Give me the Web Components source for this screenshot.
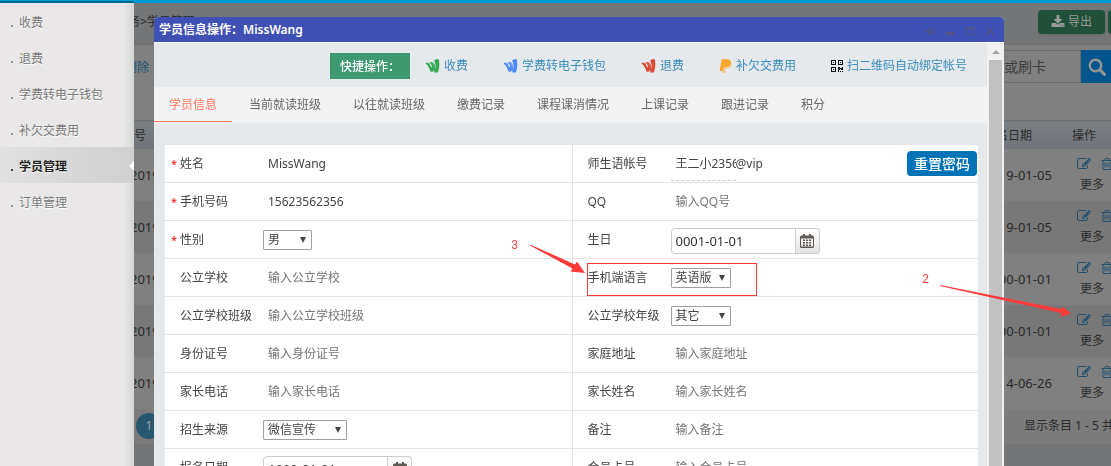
<!DOCTYPE html>
<html lang="zh-CN">
<head>
<meta charset="utf-8">
<title>学员管理</title>
<style>
  html, body { height: 100%; }
  body { margin: 0; overflow: hidden; background: #747577; color: #444;
         font: 12px/18px "Noto Sans", "Noto Sans CJK SC", sans-serif; }
</style>
</head>
<body>
<app-shell>
  <side-nav slot="nav">
    <nav-item>收费</nav-item>
    <nav-item>退费</nav-item>
    <nav-item>学费转电子钱包</nav-item>
    <nav-item>补欠交费用</nav-item>
    <nav-item active>学员管理</nav-item>
    <nav-item>订单管理</nav-item>
  </side-nav>
  <student-list></student-list>
</app-shell>

<student-dialog name="MissWang">
  <quick-bar slot="quick">
    <quick-link icon="wallet" tint="#34a853">收费</quick-link>
    <quick-link icon="wallet" tint="#4d8bf9">学费转电子钱包</quick-link>
    <quick-link icon="wallet" tint="#d94a38">退费</quick-link>
    <quick-link icon="paypal" tint="#fba631">补欠交费用</quick-link>
    <quick-link icon="qr" tint="#111">扫二维码自动绑定帐号</quick-link>
  </quick-bar>
  <tab-bar slot="tabs">
    <tab-item active>学员信息</tab-item>
    <tab-item>当前就读班级</tab-item>
    <tab-item>以往就读班级</tab-item>
    <tab-item>缴费记录</tab-item>
    <tab-item>课程课消情况</tab-item>
    <tab-item>上课记录</tab-item>
    <tab-item>跟进记录</tab-item>
    <tab-item>积分</tab-item>
  </tab-bar>
  <form-grid>
    <form-field required label="姓名" value="MissWang"></form-field>
    <form-field label="师生语帐号" kind="account" value="王二小2356" suffix="@vip"><reset-button>重置密码</reset-button></form-field>
    <form-field required label="手机号码" value="15623562356"></form-field>
    <form-field label="QQ" hint="输入QQ号"></form-field>
    <form-field required label="性别" kind="select" size="s" value="男"></form-field>
    <form-field label="生日" kind="date" value="0001-01-01"></form-field>
    <form-field label="公立学校" hint="输入公立学校"></form-field>
    <form-field label="手机端语言" kind="select" size="m" value="英语版"></form-field>
    <form-field label="公立学校班级" hint="输入公立学校班级"></form-field>
    <form-field label="公立学校年级" kind="select" size="m" value="其它"></form-field>
    <form-field label="身份证号" hint="输入身份证号"></form-field>
    <form-field label="家庭地址" hint="输入家庭地址"></form-field>
    <form-field label="家长电话" hint="输入家长电话"></form-field>
    <form-field label="家长姓名" hint="输入家长姓名"></form-field>
    <form-field label="招生来源" kind="select" size="l" value="微信宣传"></form-field>
    <form-field label="备注" hint="输入备注"></form-field>
    <form-field label="报名日期" kind="date" value="1900-01-01"></form-field>
    <form-field label="会员卡号" hint="输入会员卡号"></form-field>
  </form-grid>
</student-dialog>

<guide-marks></guide-marks>

<script>
const ICONS = {
  edit: ['0 0 1792 1792', '<path d="M888 1184l116-116-152-152-116 116v56h96v96h56zm440-720q-16-16-33 1l-350 350q-17 17-1 33t33-1l350-350q17-17 1-33zm80 594v190q0 119-84.5 203.5t-203.5 84.5h-832q-119 0-203.5-84.5t-84.5-203.5v-832q0-119 84.5-203.5t203.5-84.5h832q63 0 117 25 15 7 18 23 3 17-9 29l-49 49q-14 14-32 8-23-6-45-6h-832q-66 0-113 47t-47 113v832q0 66 47 113t113 47h832q66 0 113-47t47-113v-126q0-13 9-22l64-64q15-15 35-7t20 29zm-96-738l288 288-672 672h-288v-288zm444 132l-92 92-288-288 92-92q28-28 68-28t68 28l152 152q28 28 28 68t-28 68z"/>'],
  trash: ['0 0 1792 1792', '<path d="M704 736v576q0 14-9 23t-23 9h-64q-14 0-23-9t-9-23v-576q0-14 9-23t23-9h64q14 0 23 9t9 23zm256 0v576q0 14-9 23t-23 9h-64q-14 0-23-9t-9-23v-576q0-14 9-23t23-9h64q14 0 23 9t9 23zm256 0v576q0 14-9 23t-23 9h-64q-14 0-23-9t-9-23v-576q0-14 9-23t23-9h64q14 0 23 9t9 23zm128 724v-948h-896v948q0 22 7 40.5t14.5 27 10.5 8.5h832q3 0 10.5-8.5t14.5-27 7-40.5zm-672-1076h448l-48-117q-7-9-17-11h-317q-10 2-17 11zm928 32v64q0 14-9 23t-23 9h-96v948q0 83-47 143.5t-113 60.5h-832q-66 0-113-58.5t-47-141.5v-952h-96q-14 0-23-9t-9-23v-64q0-14 9-23t23-9h309l70-167q15-37 54-63t79-26h320q40 0 79 26t54 63l70 167h309q14 0 23 9t9 23z"/>'],
  download: ['0 0 1792 1792', '<path d="M1344 1344q0-26-19-45t-45-19-45 19-19 45 19 45 45 19 45-19 19-45zm256 0q0-26-19-45t-45-19-45 19-19 45 19 45 45 19 45-19 19-45zm128-224v320q0 40-28 68t-68 28h-1472q-40 0-68-28t-28-68v-320q0-40 28-68t68-28h465l135 136q58 56 136 56t136-56l136-136h464q40 0 68 28t28 68zm-325-569q17 41-14 70l-448 448q-18 19-45 19t-45-19l-448-448q-31-29-14-70 17-39 59-39h256v-448q0-26 19-45t45-19h256q26 0 45 19t19 45v448h256q42 0 59 39z"/>'],
  search: ['0 0 18 18', '<circle cx="7.5" cy="7.5" r="5.7" fill="none" stroke="currentColor" stroke-width="2.4"/><path d="M11.8 11.8L16.4 16.4" stroke="currentColor" stroke-width="3" stroke-linecap="round"/>'],
  wallet: ['0 0 14 14', '<path d="M0 4.2C2 3.4 3.6 4 4.4 5.6L7 11.6 5.2 12.6C4 9.6 2.4 6 0 4.2z"/><path d="M3.6 3.6C6 2.4 8 2.8 9 5L10.6 10.4 9 13.2C8 9.6 6.2 5.4 3.6 3.6z" opacity=".85"/><path d="M3 6l2.4 6.8h2.2L9 9.6 7.4 5 6 8.4z"/><path d="M8.6 1.6C10 0 11.8-.2 13.4.6 14.2 5.2 13.8 9.8 12.4 13.4H8.8C10.8 9.8 10.4 5.2 8.6 1.6z"/>'],
  paypal: ['0 0 13 14', '<path d="M2.6.2h5.600c2.800 0 4.200 1.400 3.800 3.800-.5 3-2.400 4.400-5.200 4.400H5L4 12H.6z"/><path d="M12.300 3.800c.6 3.600-1 5.600-4.400 5.600H6.600l-.9 4.400H2.800l.3-1.200h1.700L5.800 9H7c3.200 0 4.800-1.600 5.300-5.200z" opacity=".75"/>'],
  qr: ['0 0 12 12', '<path fill-rule="evenodd" d="M0 0h5v5H0zM1 1v3h3V1zM2 2h1v1H2zM7 0h5v5H7zM8 1v3h3V1zM9 2h1v1H9zM0 7h5v5H0zM1 8v3h3V8zM2 9h1v1H2zM7 7h2v1h2V7h1v3h-2V9H9v1H8v2H7zM9 11h1v1H9zM11 11h1v1h-1z"/>'],
  calendar: ['0 0 14 14', '<path fill-rule="evenodd" d="M1.5 1.5h11A1.5 1.5 0 0 1 14 3v9.5a1.5 1.5 0 0 1-1.5 1.5h-11A1.5 1.5 0 0 1 0 12.500V3a1.500 1.500 0 0 1 1.500-1.500zM1 4.500v8h12v-8z"/><path d="M3 0h2v3H3zM9 0h2v3H9zM3 5.500h2v1.600H3zM6 5.500h2v1.600H6zM9 5.500h2v1.600H9zM3 8h2v1.600H3zM6 8h2v1.600H6zM9 8h2v1.600H9zM3 10.500h2V12H3zM6 10.500h2V12H6zM9 10.500h2V12H9z"/>'],
  pin: ['0 0 11 10', '<path fill="none" stroke="currentColor" stroke-width="1.4" d="M0 5h4M4.500 1v8M5 3h5v4H5M5 6.500h5"/>'],
  min: ['0 0 10 10', '<rect y="6" width="10" height="3" rx="1.500"/>'],
  max: ['0 0 10 10', '<path fill="none" stroke="currentColor" d="M1 1.500h8v7H1z"/><path d="M.5 1h9v2.500h-9z"/>'],
  close: ['0 0 10 10', '<path fill="none" stroke="currentColor" stroke-width="1.6" d="M1 1l8 8M9 1L1 9"/>'],
};

/* Registers an element whose shadow root holds the given styles and markup. */
function define(name, css, markup) {
  const tpl = document.createElement('template');
  customElements.define(name, class extends HTMLElement {
    connectedCallback() {
      if (this.shadowRoot) return;
      tpl.innerHTML = `<style>:host,*{box-sizing:border-box}${css}</style>` +
        (typeof markup === 'function' ? markup(this) : markup);
      this.attachShadow({ mode: 'open' }).append(tpl.content.cloneNode(true));
    }
  });
}
const attr = (el, n) => el.getAttribute(n) || '';

define('svg-icon', `:host{display:inline-block;flex:none;width:14px;height:14px}svg{display:block;width:100%;height:100%;fill:currentColor}`,
  el => { const [box, body] = ICONS[attr(el, 'name')];
    return `<svg viewBox="${box}" aria-hidden="true">${body}</svg>`; });

/* Page frame: the sidebar lies over the first column of the dimmed workspace. */
define('app-shell', `
  :host{display:grid;grid-template:3px 1fr / 134px 1fr;height:100vh}
  .bar{grid-area:1/1/2/3;background:#0099d6}
  ::slotted(side-nav){grid-area:1/1/3/2;z-index:1}
  main{grid-area:2/1/3/3;min-width:0;overflow:hidden}`,
  `<div class="bar"></div><slot name="nav"></slot><main><slot></slot></main>`);

define('side-nav', `
  :host{display:block;border-top:1px solid #0099d6;
    background:linear-gradient(90deg,transparent 124px,#d4d6d6 134px),#e9e7e7}
  nav{border-top:2px solid #006e94}`,
  `<nav><slot></slot></nav>`);

define('nav-item', `
  :host{display:block}
  a{display:flex;position:relative;align-items:center;height:36px;padding:4px 0 0 10px;color:#777;
    text-decoration:none;text-shadow:0 1px 0 #fff}
  a::before{content:"";width:2px;height:2px;margin:5px 6px 0 1px;background:#999}
  :host([active]) a{font-weight:600;color:#222;background:linear-gradient(90deg,#e2e0e0,#d0d0d0)}
  :host([active]) a::before{background:#444}
  :host([active]) a::after{content:"";position:absolute;right:0;top:14px;
    border:solid transparent;border-width:5px 5px 5px 0;border-right-color:#fff}`,
  `<a href="#"><slot></slot></a>`);

define('student-list', `
  :host{display:flex;flex-direction:column;height:100%;background:#747577;color:#2a2a2a}
  header{display:flex;align-items:center;justify-content:space-between;height:42px;padding:0 0 4px 128px;border-bottom:1px solid #707070}
  .acts{display:flex;gap:3px;margin-right:-32px}
  .acts button{display:flex;align-items:center;justify-content:center;gap:3px;width:67px;height:24px;border:0;border-radius:4px;
    background:#205039;color:#9a9a9a;font:inherit;padding:0;box-shadow:1px 2px 2px #6a6a6a}
  .acts button+button{width:35px}
  .panel{background:#808080}
  .tools{display:flex;justify-content:space-between;height:75px;padding:5px 0 0 125px}
  .tools a{color:#1d4f70;text-decoration:none;line-height:36px}
  .find{display:flex;height:33px}
  .find input{width:140px;border:1px solid #6b6b6b;background:#808080;color:#333;
    font:14px "Noto Sans","Noto Sans CJK SC",sans-serif;padding:0 10px 0 48px}
  .find input::placeholder{color:#3d3d3d}
  .find button{width:30px;border:0;background:#00568c;color:#959595;padding:0 0 0 7px}
  .find svg-icon{width:18px;height:18px;display:block}
  table{width:100%;border-collapse:collapse;table-layout:fixed}
  th{height:28px;padding:2px 0 0;text-align:left;font-weight:400;background:linear-gradient(#7a7f84,#70747a);border-top:1px solid #6e7073}
  td{height:52px;padding:0;font-size:13px;overflow:hidden}
  th:first-child{padding-left:134px}
  td:first-child{padding-left:130px}
  tbody tr:nth-child(even){background:#787878}
  .date{width:88px}.ops{width:39px}
  .ops div{width:60px;font-size:12px}
  .icons{display:flex;gap:9px;padding:1px 0 5px 5px;color:#24506e}
  .more{padding-left:8px;line-height:18px}
  footer{display:flex;justify-content:space-between;align-items:center;height:35px;padding-left:136px;background:#7b7b7b}
  .page{width:26px;height:26px;border:0;border-radius:13px;background:#27566f;color:#a0a0a0;font:inherit;padding:0}
  .sum{width:87px;white-space:nowrap}`,
  () => {
    const rows = ['2019-01-05', '2019-01-05', '2000-01-01', '2000-01-01', '2014-06-26'].map(d => `
      <tr><td>2019</td><td class="date">${d}</td>
      <td class="ops"><div class="icons"><svg-icon name="edit"></svg-icon><svg-icon name="trash"></svg-icon></div><div class="more">更多</div></td></tr>`).join('');
    return `
    <header><span>务&gt;学员管理</span><div class="acts"><button><svg-icon name="download"></svg-icon>导出</button><button aria-label="更多操作"></button></div></header>
    <div class="panel">
      <div class="tools"><a href="#">删除</a><div class="find"><input aria-label="搜索" placeholder="话或刷卡"><button aria-label="查询"><svg-icon name="search"></svg-icon></button></div></div>
      <table><thead><tr><th>号</th><th class="date">报名日期</th><th class="ops">操作</th></tr></thead><tbody>${rows}</tbody></table>
    </div>
    <footer><button class="page">1</button><span class="sum">显示条目 1 - 5 共</span></footer>`;
  });

define('student-dialog', `
  :host{position:fixed;inset:17px 107px 0 154px;display:flex;flex-direction:column;border-radius:4px 4px 0 0;overflow:hidden;background:#fff}
  header{display:flex;align-items:center;flex:none;height:25px;padding:0 4px 0 5px;background:#3f51b5;color:#fff;font-weight:600}
  h1{margin:0 auto 0 0;font:inherit}
  header button{display:flex;align-items:center;justify-content:center;width:20px;height:20px;border:0;padding:3px 0 0;background:none;color:#54548a}
  header svg-icon{width:10px;height:10px}
  .wrap{display:flex;flex:1;min-height:0;margin-top:1px}
  .body{flex:1;min-width:0;overflow:hidden;background:#e5e9ec}
  .rail{display:flex;flex-direction:column;align-items:center;width:17px;background:#f1f1f1}
  .rail i{border:solid transparent;border-width:0 4px 4px;border-bottom-color:#a3a3a3;margin:7px 0 6px}
  .rail b{flex:1;width:13px;background:#c1c1c1}`,
  el => `<header><h1>学员信息操作：${attr(el, 'name')}</h1>
    ${['pin', 'min', 'max', 'close'].map(n => `<button aria-label="${n}"><svg-icon name="${n}"></svg-icon></button>`).join('')}</header>
    <div class="wrap"><div class="body"><slot name="quick"></slot><slot name="tabs"></slot><slot></slot></div>
    <div class="rail"><i></i><b></b></div></div>`);

define('quick-bar', `
  :host{display:flex;align-items:center;justify-content:flex-end;gap:35px;height:44px;padding:2px 20px 0 0}
  strong{width:80px;height:26px;margin-right:-20px;padding-left:10px;background:#3f9970;color:#fff;font-weight:500;line-height:28px}`,
  `<strong>快捷操作：</strong><slot></slot>`);

define('quick-link', `
  :host{display:block}
  a{display:flex;align-items:center;gap:4px;color:#3c8dbc;text-decoration:none}
  :host([icon=qr]) svg-icon{width:12px;height:12px}
  :host([icon=paypal]) svg-icon{width:13px}
  :host([icon=wallet]) svg-icon{width:15px}`,
  el => `<a href="#"><svg-icon name="${attr(el, 'icon')}" style="color:${attr(el, 'tint')}"></svg-icon><slot></slot></a>`);

define('tab-bar', `
  :host{display:block;background:#f3f3f3;border-bottom:2px solid #ededed}
  div{display:flex;gap:2px}`,
  `<div role="tablist"><slot></slot></div>`);

define('tab-item', `
  :host{display:block}
  button{display:block;height:35px;padding:2px 15px 0;border:0;border-bottom:1px solid transparent;background:none;color:#666;font:inherit}
  :host([active]) button{color:#ff7860;border-color:#ff7860}`,
  `<button role="tab"><slot></slot></button>`);

define('form-grid', `
  :host{display:block;margin:20px 9px 0 11px;border-top:1px solid #e5e5e5;background:#fff}
  form{display:grid;grid-template-columns:1fr 1fr}
  ::slotted(:nth-child(even)){border-left:1px solid #e5e5e5}`,
  `<form><slot></slot></form>`);

define('form-field', `
  :host{display:flex;align-items:center;height:38px;border-bottom:1px solid #e5e5e5}
  label{display:flex;flex:none;width:98px;padding-left:15px}
  label em{width:9px;margin-left:-9px;color:#f00;font-style:normal;font-size:11px}
  input{width:200px;height:35px;border:0;padding:0 0 0 5px;background:none;color:#444;font:inherit;outline:0}
  input::placeholder{color:#757575;opacity:1}
  .account input{width:65px;border-bottom:1px dashed #ccc}
  .control{display:flex;align-items:center;flex:1;min-width:0}
  .pick{display:grid}
  .pick>*{grid-area:1/1}
  select{appearance:none;height:20px;border:1px solid #a0a0a0;border-radius:1px;padding:0 0 0 4px;background:#fff;color:#444;font:inherit}
  .s select{width:49px}.m select{width:60px}.l select{width:84px}
  .pick i{align-self:center;justify-self:end;margin-right:6px;border:solid transparent;border-width:6px 3px 0;border-top-color:#444;pointer-events:none}
  .date{padding-top:3px}
  .date input{width:125px;height:26px;border:1px solid #ccc;border-radius:4px 0 0 4px;background:#fff;color:#333;padding-left:4px;font-size:13px}
  .date button{display:grid;place-items:center;width:24px;height:26px;padding:0;border:1px solid #ccc;border-left:0;border-radius:0 4px 4px 0;
    background:linear-gradient(#fff,#e4e4e4);color:#605a55}
  ::slotted(reset-button){margin:0 1px 0 auto}`,
  el => {
    const kind = attr(el, 'kind'), value = attr(el, 'value'), hint = attr(el, 'hint');
    const control = kind === 'select'
      ? `<span class="pick ${attr(el, 'size')}"><select id="f"><option>${value}</option></select><i></i></span>`
      : `<input id="f" value="${value}" placeholder="${hint}">`;
    return `<label for="f">${el.hasAttribute('required') ? '<em>*</em>' : ''}${attr(el, 'label')}</label>
      <div class="control ${kind}">${control}${kind === 'date' ? '<button type="button" aria-label="选择日期"><svg-icon name="calendar"></svg-icon></button>' : ''}
      ${attr(el, 'suffix') ? `<span>${attr(el, 'suffix')}</span>` : ''}<slot></slot></div>`;
  });

define('reset-button', `
  :host{display:block}
  button{display:block;width:70px;height:25px;padding:0;border:0;border-radius:4px;background:#0073b7;color:#fff;
    font:500 14px/25px "Noto Sans","Noto Sans CJK SC",sans-serif}`,
  `<button type="button"><slot></slot></button>`);

/* Tutorial arrows and step numbers drawn over the page. */
define('guide-marks', `
  :host{position:fixed;inset:0;pointer-events:none}
  svg{display:block;width:100%;height:100%;fill:#fb3a3a;font:12px "Liberation Mono",monospace}`,
  `<svg>
    <path d="M115.500 133.500L90.500 160.500 92.500 163.500 78 164 82.500 151 85.500 154.500z"/>
    <path d="M530 245.500V244.500L575 264.500 577 261.500 585 273 570.500 271.500 572.500 268.500z"/>
    <path d="M940 286V285L1061 309 1062.500 306.500 1071 313.500 1060.500 317 1061 313z"/>
    <rect x="587.500" y="263.500" width="169" height="32" fill="none" stroke="#fb3a3a"/>
    <text x="112" y="137">1</text><text x="922" y="283">2</text><text x="511" y="249">3</text>
  </svg>`);
</script>
</body>
</html>
